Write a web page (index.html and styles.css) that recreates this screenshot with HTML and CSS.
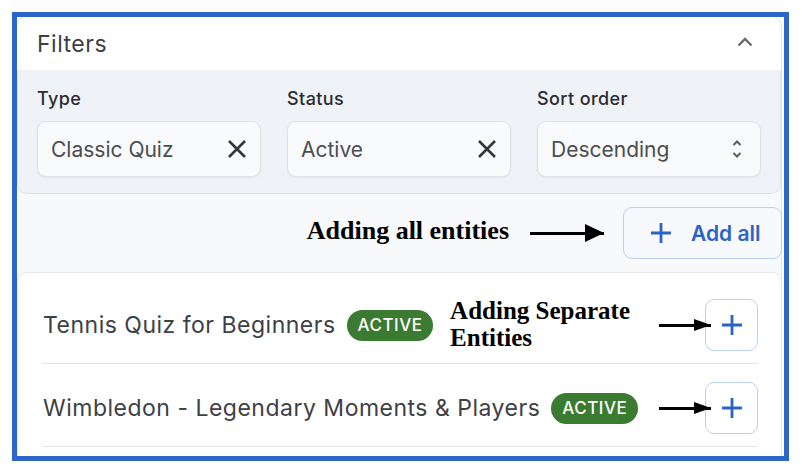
FILE: index.html
```html
<!DOCTYPE html>
<html lang="en">
<head>
    <meta charset="UTF-8">
    <title>Filters</title>
    <link rel="stylesheet" href="styles.css">
</head>
<body>
    <div class="frame">
        <div class="card">
            <!-- header -->
            <div class="card-header">
                <div class="card-title">Filters</div>
                <svg class="chevron" viewBox="0 0 16 10">
                    <path d="M1.5 8.5L8 2l6.5 6.5"/>
                </svg>
            </div>

            <!-- filters -->
            <div class="filters">
                <div class="field">
                    <div class="field-label">Type</div>
                    <div class="field-box">
                        <span>Classic Quiz</span>
                        <svg class="clear-icon" viewBox="0 0 20 20">
                            <path d="M2 2l16 16M18 2L2 18"/>
                        </svg>
                    </div>
                </div>
                <div class="field">
                    <div class="field-label">Status</div>
                    <div class="field-box">
                        <span>Active</span>
                        <svg class="clear-icon" viewBox="0 0 20 20">
                            <path d="M2 2l16 16M18 2L2 18"/>
                        </svg>
                    </div>
                </div>
                <div class="field">
                    <div class="field-label">Sort order</div>
                    <div class="field-box">
                        <span>Descending</span>
                        <svg class="sort-icon" viewBox="0 0 10 20">
                            <path d="M1.5 6L5 2.5 8.5 6M1.5 14L5 17.5 8.5 14"/>
                        </svg>
                    </div>
                </div>
            </div>

            <!-- add all -->
            <div class="actions">
                <div class="note">Adding all entities</div>
                <div class="arrow arrow-big"></div>
                <button class="btn-add-all">
                    <svg class="plus" viewBox="0 0 22 22">
                        <path d="M11 1v20M1 11h20"/>
                    </svg>
                    Add all
                </button>
            </div>

            <!-- list -->
            <div class="list">
                <div class="row">
                    <div class="row-title">Tennis Quiz for Beginners</div>
                    <div class="badge">ACTIVE</div>
                    <div class="spacer"></div>
                    <div class="note note-row">Adding Separate<br>Entities</div>
                    <div class="arrow"></div>
                    <button class="btn-add">
                        <svg class="plus" viewBox="0 0 22 22">
                            <path d="M11 1v20M1 11h20"/>
                        </svg>
                    </button>
                </div>
                <div class="row">
                    <div class="row-title">Wimbledon - Legendary Moments &amp; Players</div>
                    <div class="badge">ACTIVE</div>
                    <div class="spacer"></div>
                    <div class="arrow"></div>
                    <button class="btn-add">
                        <svg class="plus" viewBox="0 0 22 22">
                            <path d="M11 1v20M1 11h20"/>
                        </svg>
                    </button>
                </div>
            </div>
        </div>
    </div>
</body>
</html>
```

FILE: styles.css
```css
/* reset */
* {
    margin: 0;
    padding: 0;
    box-sizing: border-box;
}

body {
    background-color: #ffffff;
    font-family: 'Inter', 'Roboto', sans-serif;
    color: #3c4043;
}

/* blue frame around the crop */
.frame {
    margin: 12px;
    width: 777px;
    height: 449px;
    border: 5px solid #2d66c6;
    overflow: hidden;
    background-color: #ffffff;
}

.card {
    margin: -1px 2px 0 -1px;
    border: 1px solid #e1e4e8;
    border-radius: 10px;
    background-color: #f8f9fb;
    height: 460px;
}

/* header */
.card-header {
    display: flex;
    align-items: center;
    justify-content: space-between;
    height: 53px;
    padding: 0 28px 0 20px;
    background-color: #ffffff;
    border-radius: 10px 10px 0 0;
}

.card-title {
    font-size: 23px;
    letter-spacing: 0.5px;
    color: #3c4043;
}

.chevron {
    width: 16px;
    height: 10px;
    fill: none;
    stroke: #676b71;
    stroke-width: 2.4;
    margin-top: -4px;
}

/* filter panel */
.filters {
    display: grid;
    grid-template-columns: repeat(3, 1fr);
    column-gap: 26px;
    padding: 19px 19px 16px 19px;
    background-color: #eff2f6;
    border: 1px solid #dde2e8;
    border-top: none;
    border-radius: 0 0 10px 10px;
}

.field-label {
    font-size: 18px;
    font-weight: 500;
    letter-spacing: 0.4px;
    line-height: 20px;
    color: #2a2c30;
    margin-bottom: 12px;
}

.field-box {
    display: flex;
    align-items: center;
    justify-content: space-between;
    height: 56px;
    padding: 0 13px 0 13px;
    background-color: #f9fafc;
    border: 1px solid #dfe3e9;
    border-radius: 9px;
    box-shadow: 0 1px 2px rgba(0, 0, 0, 0.06);
    font-size: 21px;
    color: #4a4d52;
}

.clear-icon {
    width: 20px;
    height: 20px;
    fill: none;
    stroke: #35373b;
    stroke-width: 2.6;
}

.sort-icon {
    width: 10px;
    height: 20px;
    margin-right: 5px;
    fill: none;
    stroke: #5a5d62;
    stroke-width: 2;
}

/* add all */
.actions {
    display: flex;
    align-items: center;
    justify-content: flex-end;
    height: 78px;
}

.note {
    font-family: 'Liberation Serif', serif;
    font-weight: bold;
    font-size: 26px;
    color: #000000;
    margin-top: -4px;
}

.arrow {
    position: relative;
    width: 52px;
    height: 3px;
    background-color: #000000;
    margin-right: -6px;
}

.arrow::after {
    content: '';
    position: absolute;
    right: 0;
    top: -5px;
    border-left: 17px solid #000000;
    border-top: 6.5px solid transparent;
    border-bottom: 6.5px solid transparent;
}

.arrow-big {
    width: 74px;
    margin: 0 19px 0 21px;
}

.arrow-big::after {
    top: -8px;
    border-left-width: 19px;
    border-top-width: 9.5px;
    border-bottom-width: 9.5px;
}

.btn-add-all {
    display: flex;
    align-items: center;
    gap: 19px;
    height: 52px;
    width: 159px;
    padding-left: 26px;
    margin-right: -1px;
    background-color: #f8f9fc;
    border: 1px solid #bcd0ef;
    border-radius: 9px;
    font-family: 'Inter', 'Roboto', sans-serif;
    font-size: 21px;
    font-weight: 600;
    color: #2c64c6;
}

.plus {
    width: 22px;
    height: 22px;
    fill: none;
    stroke: #2c64c6;
    stroke-width: 2.8;
}

/* list */
.list {
    background-color: #ffffff;
    border: 1px solid #e3e6ea;
    border-radius: 10px 10px 0 0;
    margin-right: -1px;
    padding: 8px 23px 0 24px;
    height: 200px;
}

.row {
    display: flex;
    align-items: center;
    padding: 18px 0 12px 1px;
    border-bottom: 1px solid #e4e5e7;
}

.row-title {
    font-size: 23px;
    letter-spacing: 0.5px;
    color: #3d4045;
}

.badge {
    margin-left: 11px;
    padding: 0 11px;
    height: 31px;
    line-height: 31px;
    border-radius: 16px;
    background-color: #3b7a31;
    color: #ffffff;
    font-size: 17px;
    font-weight: 500;
    letter-spacing: 0.5px;
}

.spacer {
    flex: 1;
}

.note-row {
    font-size: 25px;
    line-height: 27px;
    margin: -2px 29px 0 0;
}

.btn-add {
    display: flex;
    align-items: center;
    justify-content: center;
    width: 53px;
    height: 52px;
    background-color: #ffffff;
    border: 1px solid #bcd0ef;
    border-radius: 9px;
}
```
